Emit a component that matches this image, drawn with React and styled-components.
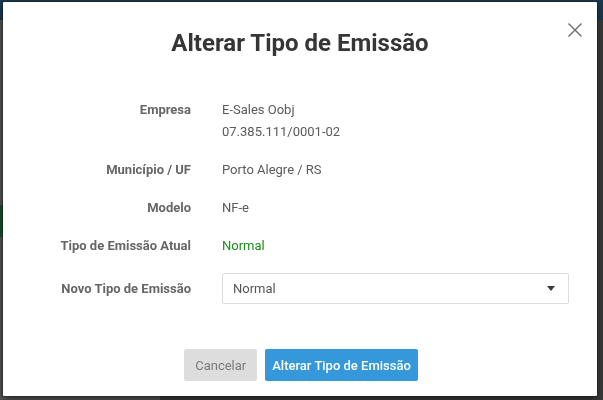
import React from 'react';
import styled, { createGlobalStyle } from 'styled-components';

const Global = createGlobalStyle`
  html, body { margin: 0; padding: 0; height: 100%; }
  body {
    font-family: Roboto, "Liberation Sans", Arial, sans-serif;
    background: #424242;
    overflow: hidden;
  }
  #root { height: 100%; }
`;

/* ---------- page behind the overlay ---------- */
const Page = styled.div`
  height: 100%;
  display: flex;
  flex-direction: column;
`;

const Header = styled.header`
  height: 20px;
  background: #1b3c53;
  flex: none;
`;

const PageBody = styled.div`
  flex: 1;
  display: flex;
`;

const Sidebar = styled.nav`
  width: 160px;
  background: #575757;
  display: flex;
  flex-direction: column;
  padding-top: 185px;
`;

const SideItem = styled.div`
  height: 32px;
  background: ${(p) => (p.$active ? '#1d5230' : 'transparent')};
`;

const Main = styled.main`
  flex: 1;
  background: #3e3e3e;
`;

/* ---------- modal ---------- */
const Overlay = styled.div`
  position: fixed;
  inset: 0;
  background: rgba(0, 0, 0, 0.05);
  display: flex;
  align-items: flex-start;
  justify-content: flex-start;
  padding: 2px 0 0 3px;
`;

const Dialog = styled.div`
  position: relative;
  width: 594px;
  height: 394px;
  box-sizing: border-box;
  background: #fff;
  border-radius: 1px;
  box-shadow: 0 0 0 1px rgba(0, 0, 0, 0.2), 0 3px 9px rgba(0, 0, 0, 0.5);
  padding: 26px 0 15px;
  display: flex;
  flex-direction: column;
`;

const Title = styled.h2`
  margin: 0;
  font-size: 24px;
  line-height: 30px;
  font-weight: 700;
  color: #363636;
  text-align: center;
`;

const CloseButton = styled.button`
  position: absolute;
  top: 21px;
  right: 15px;
  width: 14px;
  height: 14px;
  padding: 0;
  border: 0;
  background: none;
  cursor: pointer;
  display: flex;
  svg { display: block; }
`;

const Form = styled.div`
  margin-top: 41px;
  display: flex;
  flex-direction: column;
  gap: 16px;
  padding-right: 28px;
`;

const Row = styled.div`
  display: grid;
  grid-template-columns: 188px 1fr;
  column-gap: 31px;
  align-items: ${(p) => (p.$center ? 'center' : 'start')};
`;

const Label = styled.div`
  text-align: right;
  font-size: 13px;
  line-height: 22px;
  font-weight: 700;
  color: #666;
  white-space: nowrap;
`;

const Value = styled.div`
  font-size: 13px;
  line-height: 22px;
  color: ${(p) => (p.$tone === 'success' ? '#1d8b1d' : '#5a5a5a')};
`;

const SelectBox = styled.div`
  height: 31px;
  box-sizing: border-box;
  border: 1px solid #dcdcdc;
  border-radius: 2px;
  padding: 0 13px 0 10px;
  display: flex;
  align-items: center;
  justify-content: space-between;
  font-size: 13px;
  color: #555;
  background: #fff;
  cursor: pointer;
`;

const Caret = styled.span`
  width: 0;
  height: 0;
  border-left: 4px solid transparent;
  border-right: 4px solid transparent;
  border-top: 5px solid #3a3a3a;
`;

const Footer = styled.div`
  margin-top: auto;
  display: flex;
  justify-content: center;
  gap: 8px;
  padding-left: 2px;
`;

const Button = styled.button`
  height: 32px;
  padding: 0 ${(p) => (p.$primary ? '7px' : '11px')};
  border: 0;
  border-radius: 2px;
  font-family: inherit;
  font-size: 13px;
  font-weight: ${(p) => (p.$primary ? 500 : 400)};
  background: ${(p) => (p.$primary ? '#3498db' : '#dddddd')};
  color: ${(p) => (p.$primary ? '#fff' : '#7a7a7a')};
  cursor: pointer;
`;

export default function App() {
  return (
    <>
      <Global />
      <Page>
        <Header />
        <PageBody>
          <Sidebar>
            <SideItem $active />
            <SideItem />
          </Sidebar>
          <Main />
        </PageBody>
      </Page>
      <Overlay>
        <Dialog role="dialog" aria-modal="true">
          <Title>Alterar Tipo de Emissão</Title>
          <CloseButton aria-label="Fechar">
            <svg width="14" height="14" viewBox="0 0 14 14">
              <path d="M0.5 0.5 L13.5 13.5 M13.5 0.5 L0.5 13.5" stroke="#6b6b6b" strokeWidth="1.4" fill="none" />
            </svg>
          </CloseButton>
          <Form>
            <Row>
              <Label>Empresa</Label>
              <Value>
                <div>E-Sales Oobj</div>
                <div>07.385.111/0001-02</div>
              </Value>
            </Row>
            <Row>
              <Label>Município / UF</Label>
              <Value>Porto Alegre / RS</Value>
            </Row>
            <Row>
              <Label>Modelo</Label>
              <Value>NF-e</Value>
            </Row>
            <Row>
              <Label>Tipo de Emissão Atual</Label>
              <Value $tone="success">Normal</Value>
            </Row>
            <Row $center>
              <Label>Novo Tipo de Emissão</Label>
              <SelectBox>
                <span>Normal</span>
                <Caret />
              </SelectBox>
            </Row>
          </Form>
          <Footer>
            <Button>Cancelar</Button>
            <Button $primary>Alterar Tipo de Emissão</Button>
          </Footer>
        </Dialog>
      </Overlay>
    </>
  );
}
